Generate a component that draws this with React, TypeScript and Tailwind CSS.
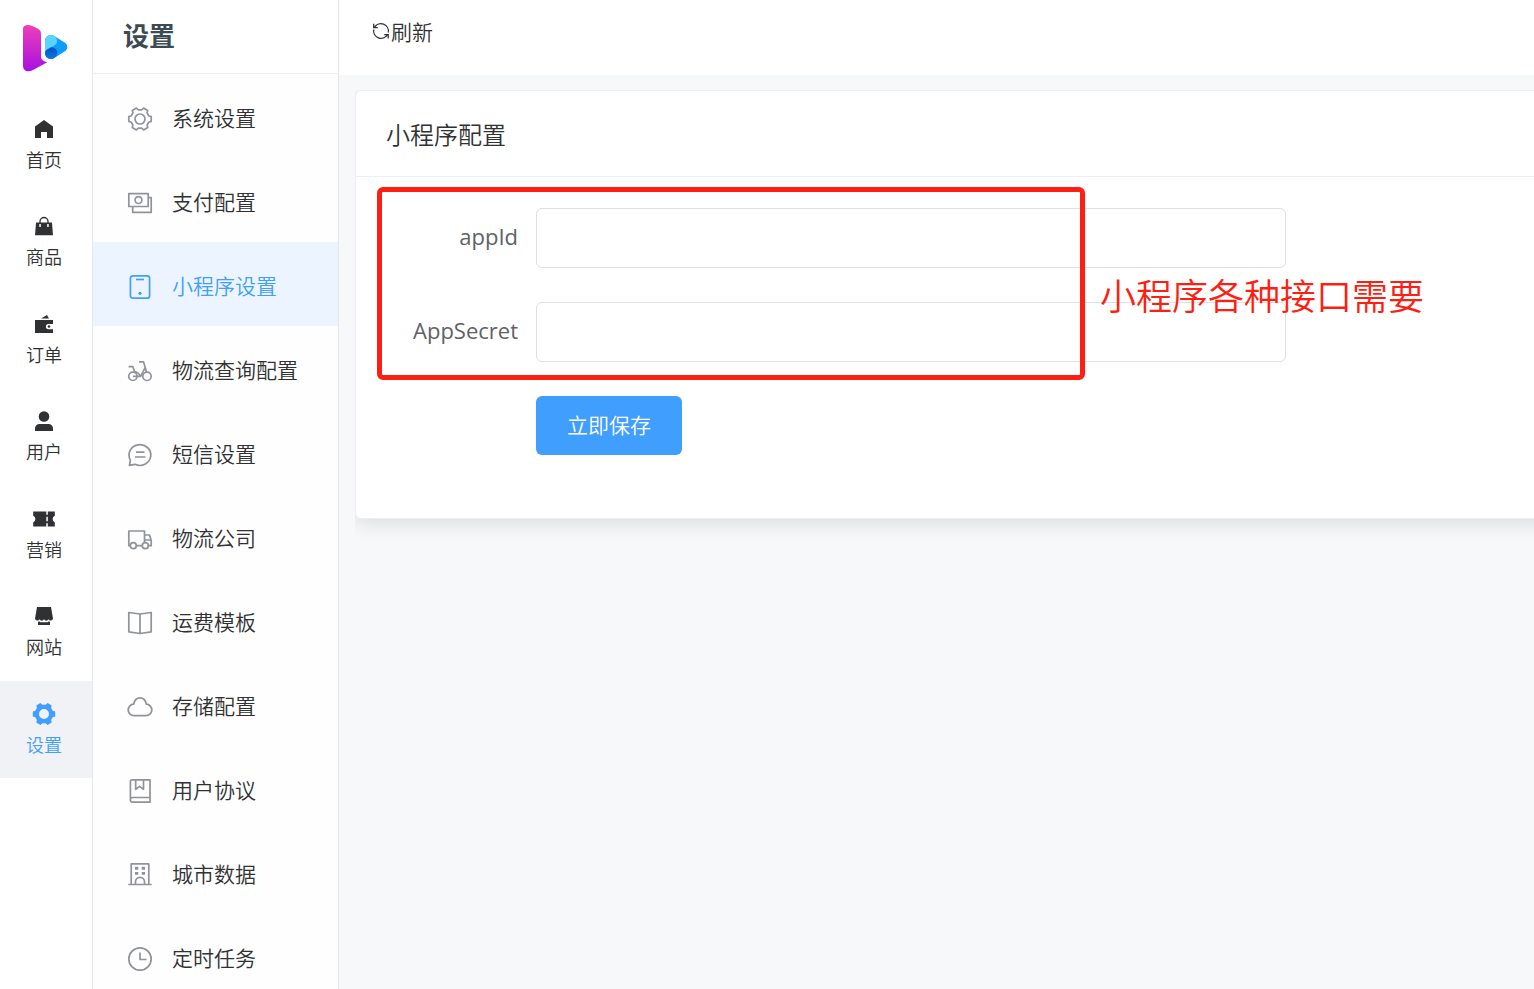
import type { ReactNode } from "react";

type MenuItem = {
  label: string;
  icon: ReactNode;
  active?: boolean;
};

const GEAR =
  "M23.2 9.6v4.8L20.7 15.2 19.1 18l.6 2.5-4.1 2.4-2-1.7h-3.2l-2 1.7-4.1-2.4.6-2.5-1.6-2.8L.8 14.4V9.6l2.5-.8L4.9 6l-.6-2.5 4.1-2.4 2 1.7h3.2l2-1.7 4.1 2.4-.6 2.5 1.6 2.8z";

function RailIcon({ children }: { children: ReactNode }) {
  return (
    <svg viewBox="0 0 24 24" className="h-6 w-6 shrink-0" fill="currentColor" aria-hidden="true">
      {children}
    </svg>
  );
}

function LineIcon({ children }: { children: ReactNode }) {
  return (
    <svg
      viewBox="0 0 24 24"
      className="h-6 w-6 shrink-0 overflow-visible"
      fill="none"
      stroke="currentColor"
      strokeWidth="1.7"
      strokeLinejoin="round"
      aria-hidden="true"
    >
      {children}
    </svg>
  );
}

const railItems: MenuItem[] = [
  { label: "首页", icon: <path d="M12 3l9 6.5V21h-6v-6H9v6H3V9.5z" /> },
  {
    label: "商品",
    icon: (
      <>
        <path d="M8 9V7.500a4 4 0 0 1 8 0V9" fill="none" stroke="currentColor" strokeWidth="1.3" />
        <path fillRule="evenodd" d="M4 8.500h16L21 21.300H3zM7.300 10v3h1.500v-3zM15.200 10v3h1.500v-3z" />
      </>
    ),
  },
  {
    label: "订单",
    icon: (
      <>
        <path d="M9 6.500l6-3.500 2 3.500z" />
        <path d="M3 8h18v4h-4.500a2.600 2.600 0 0 0 0 5.200H21V21H3z" />
        <circle cx="17" cy="14.500" r="1.300" />
      </>
    ),
  },
  {
    label: "用户",
    icon: (
      <>
        <circle cx="12" cy="7.500" r="5.300" />
        <path d="M3 22v-2.500a4.500 4.500 0 0 1 4.500-4.500h9a4.500 4.500 0 0 1 4.500 4.500V22z" />
      </>
    ),
  },
  {
    label: "营销",
    icon: (
      <path
        fillRule="evenodd"
        d="M1.200 4.500h13.100v3.200h1.500V4.500h7v4.200a3.600 3.600 0 0 0 0 6.600v4.200h-7v-3.200h-1.500v3.200H1.200v-4.200a3.600 3.600 0 0 0 0-6.600zM14.300 9.800v4.400h1.500V9.800z"
      />
    ),
  },
  {
    label: "网站",
    icon: (
      <>
        <path d="M5 3h14l2 11.500a2.400 2.400 0 0 1-4.500.8 2.500 2.500 0 0 1-4.500 0 2.500 2.500 0 0 1-4.500 0 2.400 2.400 0 0 1-4.500-.8z" />
        <path d="M6 17.800l1.500-.2.800.7h7.400l.8-.7 1.500.2V21H6z" />
      </>
    ),
  },
  {
    label: "设置",
    active: true,
    icon: <path fillRule="evenodd" d={`${GEAR}M12 7a5 5 0 1 0 0 10 5 5 0 0 0 0-10z`} />,
  },
];

const menuItems: MenuItem[] = [
  {
    label: "系统设置",
    icon: (
      <>
        <path d={GEAR} />
        <circle cx="12" cy="12" r="5" />
      </>
    ),
  },
  {
    label: "支付配置",
    icon: (
      <>
        <path d="M.8 2.700h19.400v12.800H.8zM20.200 6.700h3v14.600H4.700v-5.800" />
        <circle cx="10.500" cy="9.100" r="3.400" />
      </>
    ),
  },
  {
    label: "小程序设置",
    active: true,
    icon: (
      <>
        <rect x="2.400" y=".8" width="19.200" height="22.400" rx="2.500" />
        <path d="M8 4.500h8" />
        <circle cx="12" cy="18.300" r="1.600" fill="currentColor" stroke="none" />
      </>
    ),
  },
  {
    label: "物流查询配置",
    icon: (
      <>
        <circle cx="4.900" cy="17.300" r="4.200" />
        <circle cx="19" cy="17.300" r="4.200" />
        <path d="M.6 7.700h4.300l1.700 5.200M11 2.800h4.500l3 10.300M4.900 17.300h7.800l4.200-8.200M6.600 12.500q3.500.5 6.100 4.800" />
      </>
    ),
  },
  {
    label: "短信设置",
    icon: <path d="M1.400 22.300l1-5.200a10.900 10.400 0 1 1 4.600 4.200zM8 9.200h8.500M7 14h10.500" />,
  },
  {
    label: "物流公司",
    icon: (
      <>
        <path d="M2.300 18.700H.8V4h15.700v11M8.300 18.700h6M16.500 8h5l1.700 5.500v5.200h-2.900M16.500 13h6.500" />
        <circle cx="5.300" cy="18.700" r="3" />
        <circle cx="17.300" cy="18.700" r="3" />
      </>
    ),
  },
  {
    label: "运费模板",
    icon: <path d="M.8 1.500L12 3l11.200-1.500v19.300L12 22.500.8 20.800zM12 3v19.500" />,
  },
  {
    label: "存储配置",
    icon: <path d="M6.200 20.600A5.700 5.700 0 0 1 5.600 9.200C6.500 5 8.800 2.900 12 2.900s5.500 2.100 6.400 6.300a5.700 5.700 0 0 1-.6 11.400z" />,
  },
  {
    label: "用户协议",
    icon: <path d="M22 18.500H4.400a2.200 2.200 0 0 0-2 2.400V2.500Q2.400.8 4.100.8H22v22.400H4.500a2.100 2.100 0 0 1-2.100-2.300M7.700.8v9.500l3.900-3 3.900 3V.8" />,
  },
  {
    label: "城市数据",
    icon: (
      <>
        <path d="M3.200 21.500V.8h17.600v20.700M.3 21.500h23.400M7.500 21.500v-2.700a4.500 4.500 0 0 1 9 0v2.700" />
        <path d="M7 3.800h3.300v2.900H7zM13.700 3.800H17v2.900h-3.300zM7 8.900h3.300v2.900H7zM13.700 8.900H17v2.900h-3.300z" fill="currentColor" stroke="none" />
      </>
    ),
  },
  {
    label: "定时任务",
    icon: (
      <>
        <circle cx="12" cy="12" r="11.200" />
        <path d="M12 5.500v7h6.500" />
      </>
    ),
  },
];

function Logo() {
  return (
    <svg viewBox="0 0 141 150" className="h-[50px] w-[47px]" role="img" aria-label="logo">
      <defs>
        <linearGradient id="logo-pink" x1="0" y1="0" x2="0" y2="1">
          <stop offset="0" stopColor="#ee40b8" />
          <stop offset="1" stopColor="#a80fe0" />
        </linearGradient>
        <linearGradient id="logo-blue" x1="0" y1="0" x2="0" y2="1">
          <stop offset="0" stopColor="#0150c4" />
          <stop offset="1" stopColor="#0a78e4" />
        </linearGradient>
      </defs>
      <path d="M3 17Q3 6 18 6q7 0 13 3l17 8q9 5 9 15v70q1 12 19 16l-43 23q-13 6-22 2-8-4-8-13z" fill="url(#logo-pink)" />
      <path d="M86 36q6 0 12 4l32 20q6 5 6 12t-6 12l-32 20q-6 4-12 4a17 17 0 0 1-17-17V53a17 17 0 0 1 17-17z" fill="#0f9cff" />
      <path d="M69 86V53a17 17 0 0 1 17-17q6 0 12 4 7 5 8 14-2 10-10 14L74 80q-5 3-5 8z" fill="#5cd2ff" />
      <path d="M69 90q1-7 8-11l10-6q9 0 15 6 7 6 1 21l-5 4q-6 4-12 4a17 17 0 0 1-17-18z" fill="url(#logo-blue)" />
    </svg>
  );
}

function FormRow({ id, label }: { id: string; label: string }) {
  return (
    <div className="flex items-center">
      <label htmlFor={id} className="w-[162px] shrink-0 pr-[18px] pb-[3px] text-right text-[22px] text-[#606266]">
        {label}
      </label>
      <input
        id={id}
        type="text"
        className="h-[60px] w-full max-w-[750px] rounded-md border border-[#dcdfe6] bg-white px-5 text-[21px] text-[#606266] outline-none focus:border-[#409eff]"
      />
    </div>
  );
}

export default function App() {
  return (
    <div className="flex h-screen overflow-hidden bg-[#f7f8fa] font-['Noto_Sans_CJK_SC',sans-serif] font-[350] text-[#303133]">
      <nav className="w-[93px] shrink-0 border-r border-[#e6e6ee] bg-white">
        <a href="#home" className="flex h-24 pt-[23px] pl-[22px]">
          <Logo />
        </a>
        <div className="flex h-[682px] flex-col">
          {railItems.map((item) => (
            <a
              key={item.label}
              href="#rail"
              className={`flex flex-1 flex-col items-center gap-1 pt-[21px] pr-1 ${
                item.active ? "bg-[#f0f2f5] text-[#409eff]" : ""
              }`}
            >
              <RailIcon>{item.icon}</RailIcon>
              <span className="text-lg leading-7">{item.label}</span>
            </a>
          ))}
        </div>
      </nav>

      <aside className="flex w-[246px] shrink-0 flex-col border-r border-[#e6e6e6] bg-[#fefefe]">
        <h1 className="flex h-[74px] shrink-0 items-center border-b border-[#ebeef5] bg-white pb-1 pl-[30px] text-[26px] font-bold text-[#3c4a54]">
          设置
        </h1>
        <nav className="min-h-0 flex-1 overflow-y-auto [scrollbar-width:none]">
          {menuItems.map((item) => (
            <a
              key={item.label}
              href="#menu"
              className={`flex h-[84px] items-center gap-5 pt-1.5 pl-[35px] ${
                item.active ? "bg-[#ecf5ff] text-[#409eff]" : ""
              }`}
            >
              <span className={item.active ? "" : "text-[#909399]"}>
                <LineIcon>{item.icon}</LineIcon>
              </span>
              <span className="pb-1 text-[21px] leading-8">{item.label}</span>
            </a>
          ))}
        </nav>
      </aside>

      <div className="flex min-w-0 flex-1 flex-col">
        <header className="h-[75px] shrink-0 bg-white pt-[15px] pl-[33px]">
          <button type="button" className="flex items-center gap-px text-[21px] leading-8">
            <svg viewBox="0 0 18 18" className="h-[18px] w-[18px]" fill="none" stroke="currentColor" strokeWidth="1.3" aria-hidden="true">
              <path d="M2.500 5.300A7.500 7.500 0 0 1 16.300 10.500M1.700 1.800v3.800h4M15.500 12.700A7.500 7.500 0 0 1 1.700 7.500M12.200 12.600h4v3.800" />
            </svg>
            刷新
          </button>
        </header>

        <main className="min-h-0 flex-1 pt-[15px] pl-4">
          {/* the card runs past the right edge, and its shadow only falls below it */}
          <section className="relative -mr-6 rounded-md border border-[#ebeef5] bg-white shadow-[0_4px_20px_0_rgba(0,0,0,0.12)] [clip-path:inset(0_0_-40px_0)]">
            <h2 className="flex h-[86px] items-center border-b border-[#ebeef5] pl-[30px] text-2xl">小程序配置</h2>
            <form
              className="flex flex-col gap-[34px] pt-[31px] pr-14 pb-[63px] pl-[18px] font-['Open_Sans','Noto_Sans_CJK_SC',sans-serif] font-normal"
              onSubmit={(event) => event.preventDefault()}
            >
              <FormRow id="app-id" label="appId" />
              <FormRow id="app-secret" label="AppSecret" />
              <div className="pl-[162px]">
                <button
                  type="submit"
                  className="block h-[59px] w-[146px] rounded-md bg-[#409eff] pb-0.5 font-['Noto_Sans_CJK_SC',sans-serif] text-[21px] font-[350] text-white"
                >
                  立即保存
                </button>
              </div>
            </form>

            <div className="pointer-events-none absolute top-24 left-[21px] h-[193px] w-[708px] rounded-md border-5 border-[#ff1f12]" />
            <p className="pointer-events-none absolute top-[177px] left-[744px] text-4xl leading-[52px] whitespace-nowrap text-[#ff1f12]">
              小程序各种接口需要
            </p>
          </section>
        </main>
      </div>
    </div>
  );
}
